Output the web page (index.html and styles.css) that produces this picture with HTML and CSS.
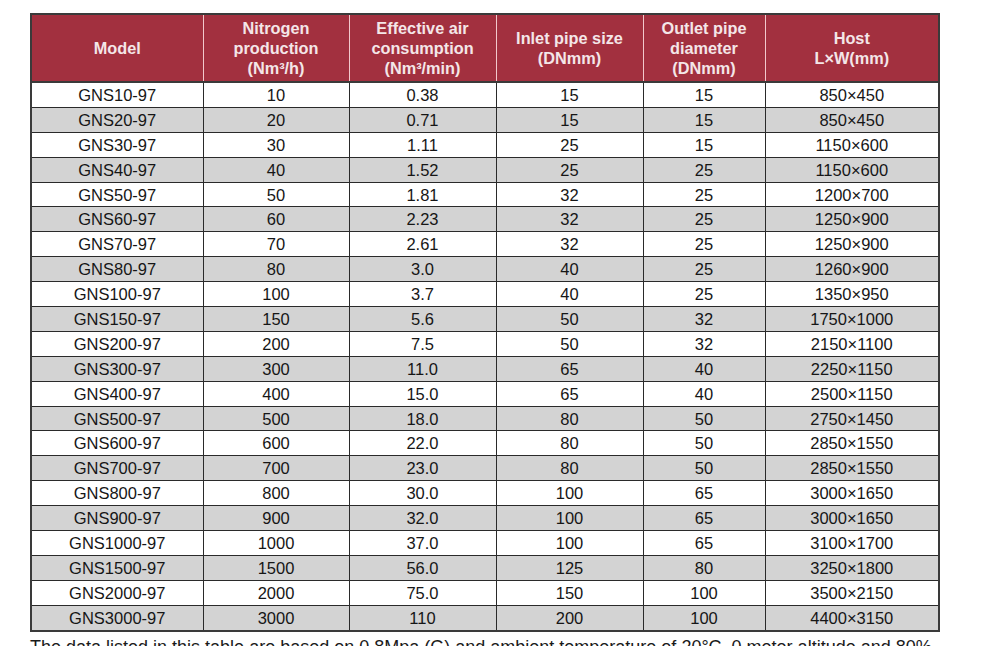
FILE: index.html
```html
<!DOCTYPE html>
<html lang="en">
<head>
    <meta charset="UTF-8">
    <title>GNS Nitrogen Generator Specifications</title>
    <link rel="stylesheet" href="styles.css">
</head>
<body>
    <table class="spec-table">
        <colgroup>
            <col class="col-model">
            <col class="col-n2">
            <col class="col-air">
            <col class="col-inlet">
            <col class="col-outlet">
            <col class="col-host">
        </colgroup>
        <thead>
            <tr>
                <th>Model</th>
                <th>Nitrogen<br>production<br>(Nm³/h)</th>
                <th>Effective air<br>consumption<br>(Nm³/min)</th>
                <th>Inlet pipe size<br>(DNmm)</th>
                <th>Outlet pipe<br>diameter<br>(DNmm)</th>
                <th>Host<br>L×W(mm)</th>
            </tr>
        </thead>
        <tbody>
            <tr><td>GNS10-97</td><td>10</td><td>0.38</td><td>15</td><td>15</td><td>850×450</td></tr>
            <tr><td>GNS20-97</td><td>20</td><td>0.71</td><td>15</td><td>15</td><td>850×450</td></tr>
            <tr><td>GNS30-97</td><td>30</td><td>1.11</td><td>25</td><td>15</td><td>1150×600</td></tr>
            <tr><td>GNS40-97</td><td>40</td><td>1.52</td><td>25</td><td>25</td><td>1150×600</td></tr>
            <tr><td>GNS50-97</td><td>50</td><td>1.81</td><td>32</td><td>25</td><td>1200×700</td></tr>
            <tr><td>GNS60-97</td><td>60</td><td>2.23</td><td>32</td><td>25</td><td>1250×900</td></tr>
            <tr><td>GNS70-97</td><td>70</td><td>2.61</td><td>32</td><td>25</td><td>1250×900</td></tr>
            <tr><td>GNS80-97</td><td>80</td><td>3.0</td><td>40</td><td>25</td><td>1260×900</td></tr>
            <tr><td>GNS100-97</td><td>100</td><td>3.7</td><td>40</td><td>25</td><td>1350×950</td></tr>
            <tr><td>GNS150-97</td><td>150</td><td>5.6</td><td>50</td><td>32</td><td>1750×1000</td></tr>
            <tr><td>GNS200-97</td><td>200</td><td>7.5</td><td>50</td><td>32</td><td>2150×1100</td></tr>
            <tr><td>GNS300-97</td><td>300</td><td>11.0</td><td>65</td><td>40</td><td>2250×1150</td></tr>
            <tr><td>GNS400-97</td><td>400</td><td>15.0</td><td>65</td><td>40</td><td>2500×1150</td></tr>
            <tr><td>GNS500-97</td><td>500</td><td>18.0</td><td>80</td><td>50</td><td>2750×1450</td></tr>
            <tr><td>GNS600-97</td><td>600</td><td>22.0</td><td>80</td><td>50</td><td>2850×1550</td></tr>
            <tr><td>GNS700-97</td><td>700</td><td>23.0</td><td>80</td><td>50</td><td>2850×1550</td></tr>
            <tr><td>GNS800-97</td><td>800</td><td>30.0</td><td>100</td><td>65</td><td>3000×1650</td></tr>
            <tr><td>GNS900-97</td><td>900</td><td>32.0</td><td>100</td><td>65</td><td>3000×1650</td></tr>
            <tr><td>GNS1000-97</td><td>1000</td><td>37.0</td><td>100</td><td>65</td><td>3100×1700</td></tr>
            <tr><td>GNS1500-97</td><td>1500</td><td>56.0</td><td>125</td><td>80</td><td>3250×1800</td></tr>
            <tr><td>GNS2000-97</td><td>2000</td><td>75.0</td><td>150</td><td>100</td><td>3500×2150</td></tr>
            <tr><td>GNS3000-97</td><td>3000</td><td>110</td><td>200</td><td>100</td><td>4400×3150</td></tr>
        </tbody>
    </table>
    <p class="note">The data listed in this table are based on 0.8Mpa (G) and ambient temperature of 20°C, 0 meter altitude and 80% relative humidity.</p>
</body>
</html>
```

FILE: styles.css
```css
body {
    margin: 0;
    padding: 13px 0 0 30px;
    background-color: #fff;
    font-family: "Liberation Sans", Arial, sans-serif;
    color: #161616;
}
.spec-table {
    width: 908px;
    border-collapse: collapse;
    table-layout: fixed;
    border: 2px solid #3a3a3a;
}
.col-model { width: 172px; }
.col-n2 { width: 146px; }
.col-air { width: 147px; }
.col-inlet { width: 147px; }
.col-outlet { width: 122px; }
.col-host { width: 174px; }
.spec-table th {
    height: 66px;
    padding: 0;
    background-color: #a2303f;
    color: #f4e6e8;
    font-size: 16.3px;
    font-weight: bold;
    line-height: 20px;
    border-left: 1px solid #f2c8cc;
    border-bottom: 2px solid #3a3a3a;
}
.spec-table th:first-child {
    border-left: 2px solid #3a3a3a;
}
.spec-table td {
    height: 23.9px;
    padding: 0;
    text-align: center;
    font-size: 16.5px;
    line-height: 18px;
    border: 1px solid #2a2a2a;
}
.spec-table tbody tr:nth-child(even) td {
    background-color: #d3d3d3;
}
.note {
    width: 960px;
    margin: 4px 0 0 0;
    font-size: 18px;
    line-height: 22px;
    color: #1a1a1a;
}
```
